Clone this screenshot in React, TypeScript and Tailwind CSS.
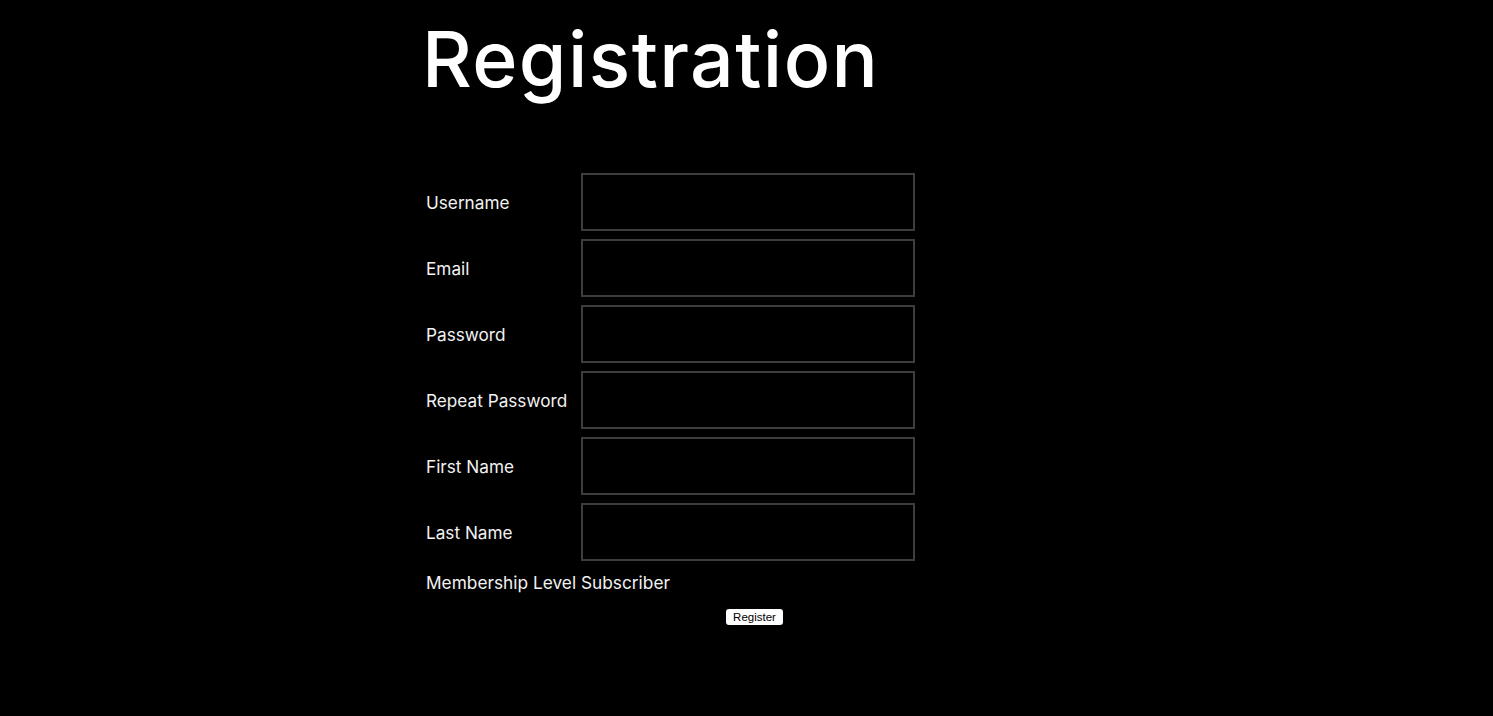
import React from "react";

const fields = ["Username", "Email", "Password", "Repeat Password", "First Name", "Last Name"];

export default function App() {
  return (
    <div className="min-h-[716px] w-full bg-black text-white" style={{ fontFamily: "Inter, 'Noto Sans', sans-serif" }}>
      <div className="pl-[422px]">
        <h1 className="h-[112px] pt-[15px] text-[77px] leading-[88px] font-medium tracking-[1.4px]">Registration</h1>
        <div className="mt-[61px] pl-[4px]">
          <div className="flex flex-col gap-[8px]">
            {fields.map((f) => (
              <div key={f} className="flex items-center">
                <label className="w-[155px] pt-[2px] text-[17.2px] leading-[24px] text-[#f2f2f2]">{f}</label>
                <input className="h-[58px] w-[334px] border-2 border-[#3d3d3d] bg-black outline-none" />
              </div>
            ))}
          </div>
          <div className="mt-[10px] text-[17.3px] leading-[24px] text-[#f2f2f2]">Membership Level Subscriber</div>
          <div className="mt-[8px] pl-[300px]">
            <button className="h-[16px] w-[57px] rounded-[3px] bg-white text-[11.5px] leading-[16px] text-black" style={{ fontFamily: "'Liberation Sans', Arial, sans-serif" }}>
              Register
            </button>
          </div>
        </div>
      </div>
    </div>
  );
}
